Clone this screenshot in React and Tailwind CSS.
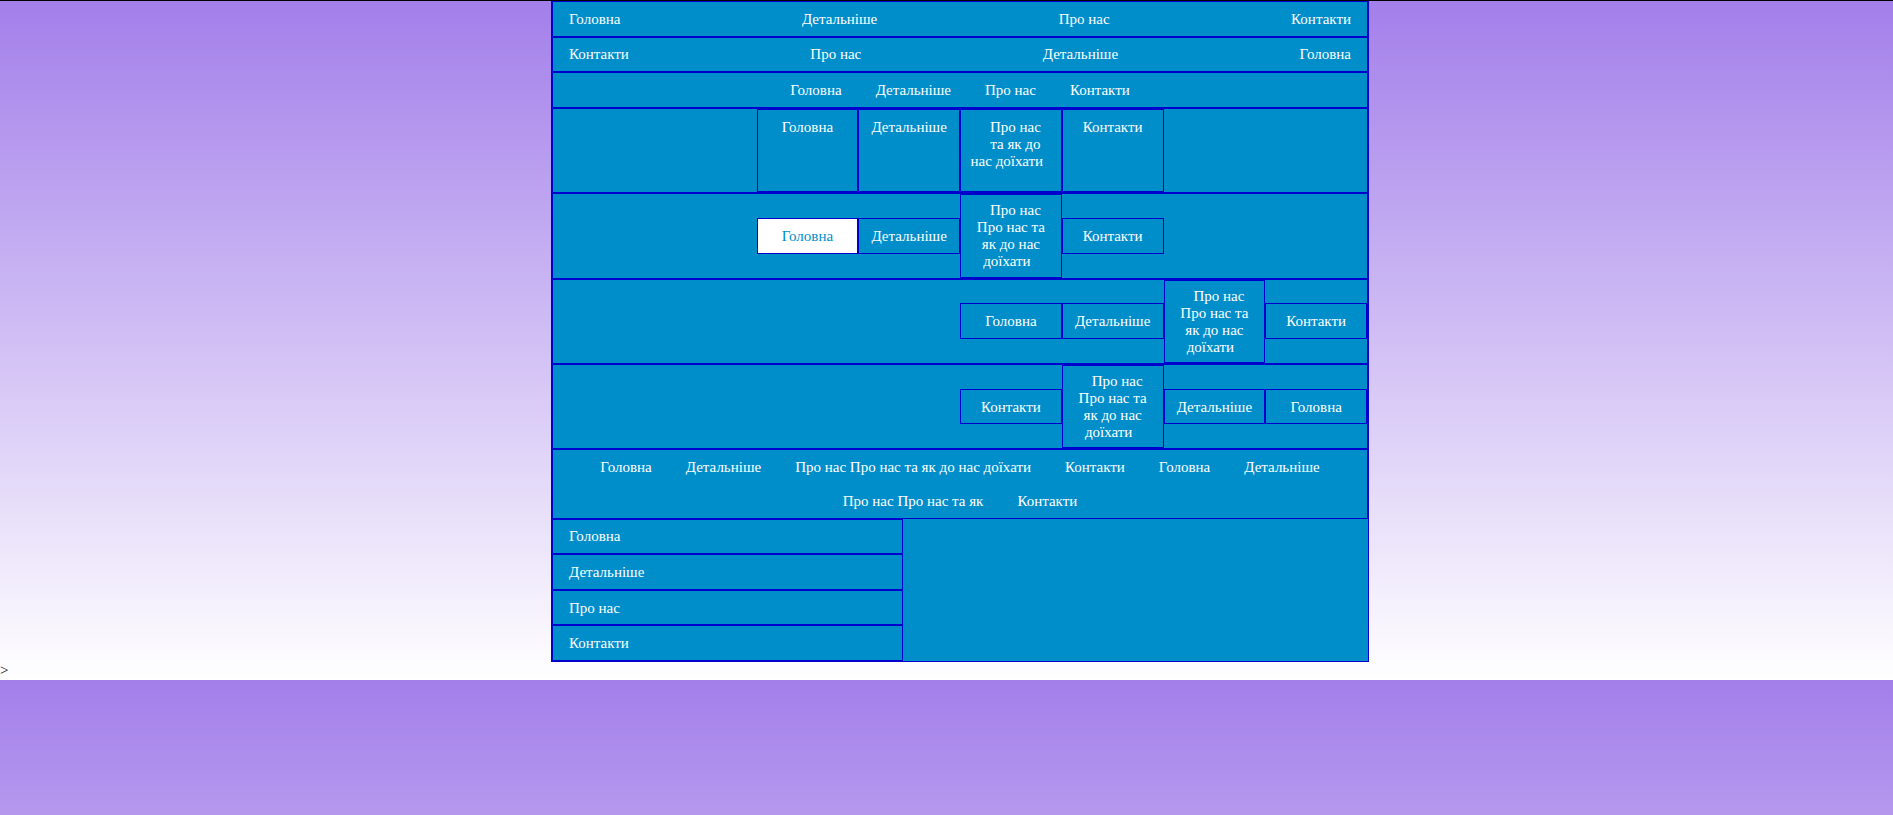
import React from "react";

const links = ["Головна", "Детальніше", "Про нас", "Контакти"];
const longLines = ["Про нас", "Про нас та", "як до нас", "доїхати"];

function Box({ children, active, tall, className = "" }) {
  return (
    <a
      href="#"
      className={
        "w-[12.5%] border border-[#0000cd] text-center pt-[8.8px] pb-[7.8px] " +
        (active ? "bg-white text-[#008ecb] " : "") +
        (tall ? "self-stretch flex flex-col justify-center " : "") +
        className
      }
    >
      {children}
    </a>
  );
}

function LongText({ lines }) {
  return lines.map((line, i) => (
    <span
      key={i}
      className={
        "block " +
        (i === 0 ? "pl-[9px] " : "") +
        (i === lines.length - 1 ? "pr-[8px]" : "")
      }
    >
      {line}
    </span>
  ));
}

export default function App() {
  return (
    <div className="min-h-screen border-t border-black bg-[linear-gradient(#a37fea,#ffffff)] bg-[length:100%_679px] bg-repeat-y font-['Liberation_Serif',serif] text-[15px] leading-[17px] text-white">
      <div className="ml-[551px] w-[818px] border-x border-b border-[#0000cd] bg-[#008ecb]">
        {/* 1 */}
        <nav className="flex justify-between border border-[#0000cd]">
          {links.map((l) => (
            <a key={l} href="#" className="px-4 pt-[8.8px] pb-[7.8px]">
              {l}
            </a>
          ))}
        </nav>

        {/* 2 */}
        <nav className="flex flex-row-reverse justify-between border border-[#0000cd]">
          {links.map((l) => (
            <a key={l} href="#" className="px-4 pt-[8.8px] pb-[7.8px]">
              {l}
            </a>
          ))}
        </nav>

        {/* 3 */}
        <nav className="flex justify-center border border-[#0000cd]">
          {links.map((l) => (
            <a key={l} href="#" className="px-[17px] pt-[8.8px] pb-[7.8px]">
              {l}
            </a>
          ))}
        </nav>

        {/* 4 */}
        <nav className="flex h-[85.4px] justify-center border border-[#0000cd]">
          <Box>Головна</Box>
          <Box>Детальніше</Box>
          <Box>
            <span className="block pl-[9px]">Про нас</span>
            <span className="block pl-[9px]">та як до</span>
            <span className="block pr-[8px]">нас доїхати</span>
          </Box>
          <Box>Контакти</Box>
        </nav>

        {/* 5 */}
        <nav className="flex h-[85.4px] items-center justify-center border border-[#0000cd]">
          <Box active>Головна</Box>
          <Box>Детальніше</Box>
          <Box tall>
            <LongText lines={longLines} />
          </Box>
          <Box>Контакти</Box>
        </nav>

        {/* 6 */}
        <nav className="flex h-[85.4px] items-center justify-end border border-[#0000cd]">
          <Box>Головна</Box>
          <Box>Детальніше</Box>
          <Box tall>
            <LongText lines={longLines} />
          </Box>
          <Box>Контакти</Box>
        </nav>

        {/* 7 */}
        <nav className="flex h-[85.4px] flex-row-reverse items-center justify-start border border-[#0000cd]">
          <Box>Головна</Box>
          <Box>Детальніше</Box>
          <Box tall>
            <LongText lines={longLines} />
          </Box>
          <Box>Контакти</Box>
        </nav>

        {/* 8 */}
        <nav className="flex flex-wrap justify-center border border-[#0000cd]">
          {[
            "Головна",
            "Детальніше",
            "Про нас Про нас та як до нас доїхати",
            "Контакти",
            "Головна",
            "Детальніше",
            "Про нас Про нас та як",
            "Контакти",
          ].map((l, i) => (
            <a key={i} href="#" className="px-[17px] pt-[8.8px] pb-[7.8px]">
              {l}
            </a>
          ))}
        </nav>

        {/* 9 */}
        <nav className="flex w-[351px] flex-col">
          {links.map((l) => (
            <a key={l} href="#" className="border border-[#0000cd] px-4 pt-[8.8px] pb-[7.8px]">
              {l}
            </a>
          ))}
        </nav>
      </div>
      <div className="text-black">&gt;</div>
    </div>
  );
}
